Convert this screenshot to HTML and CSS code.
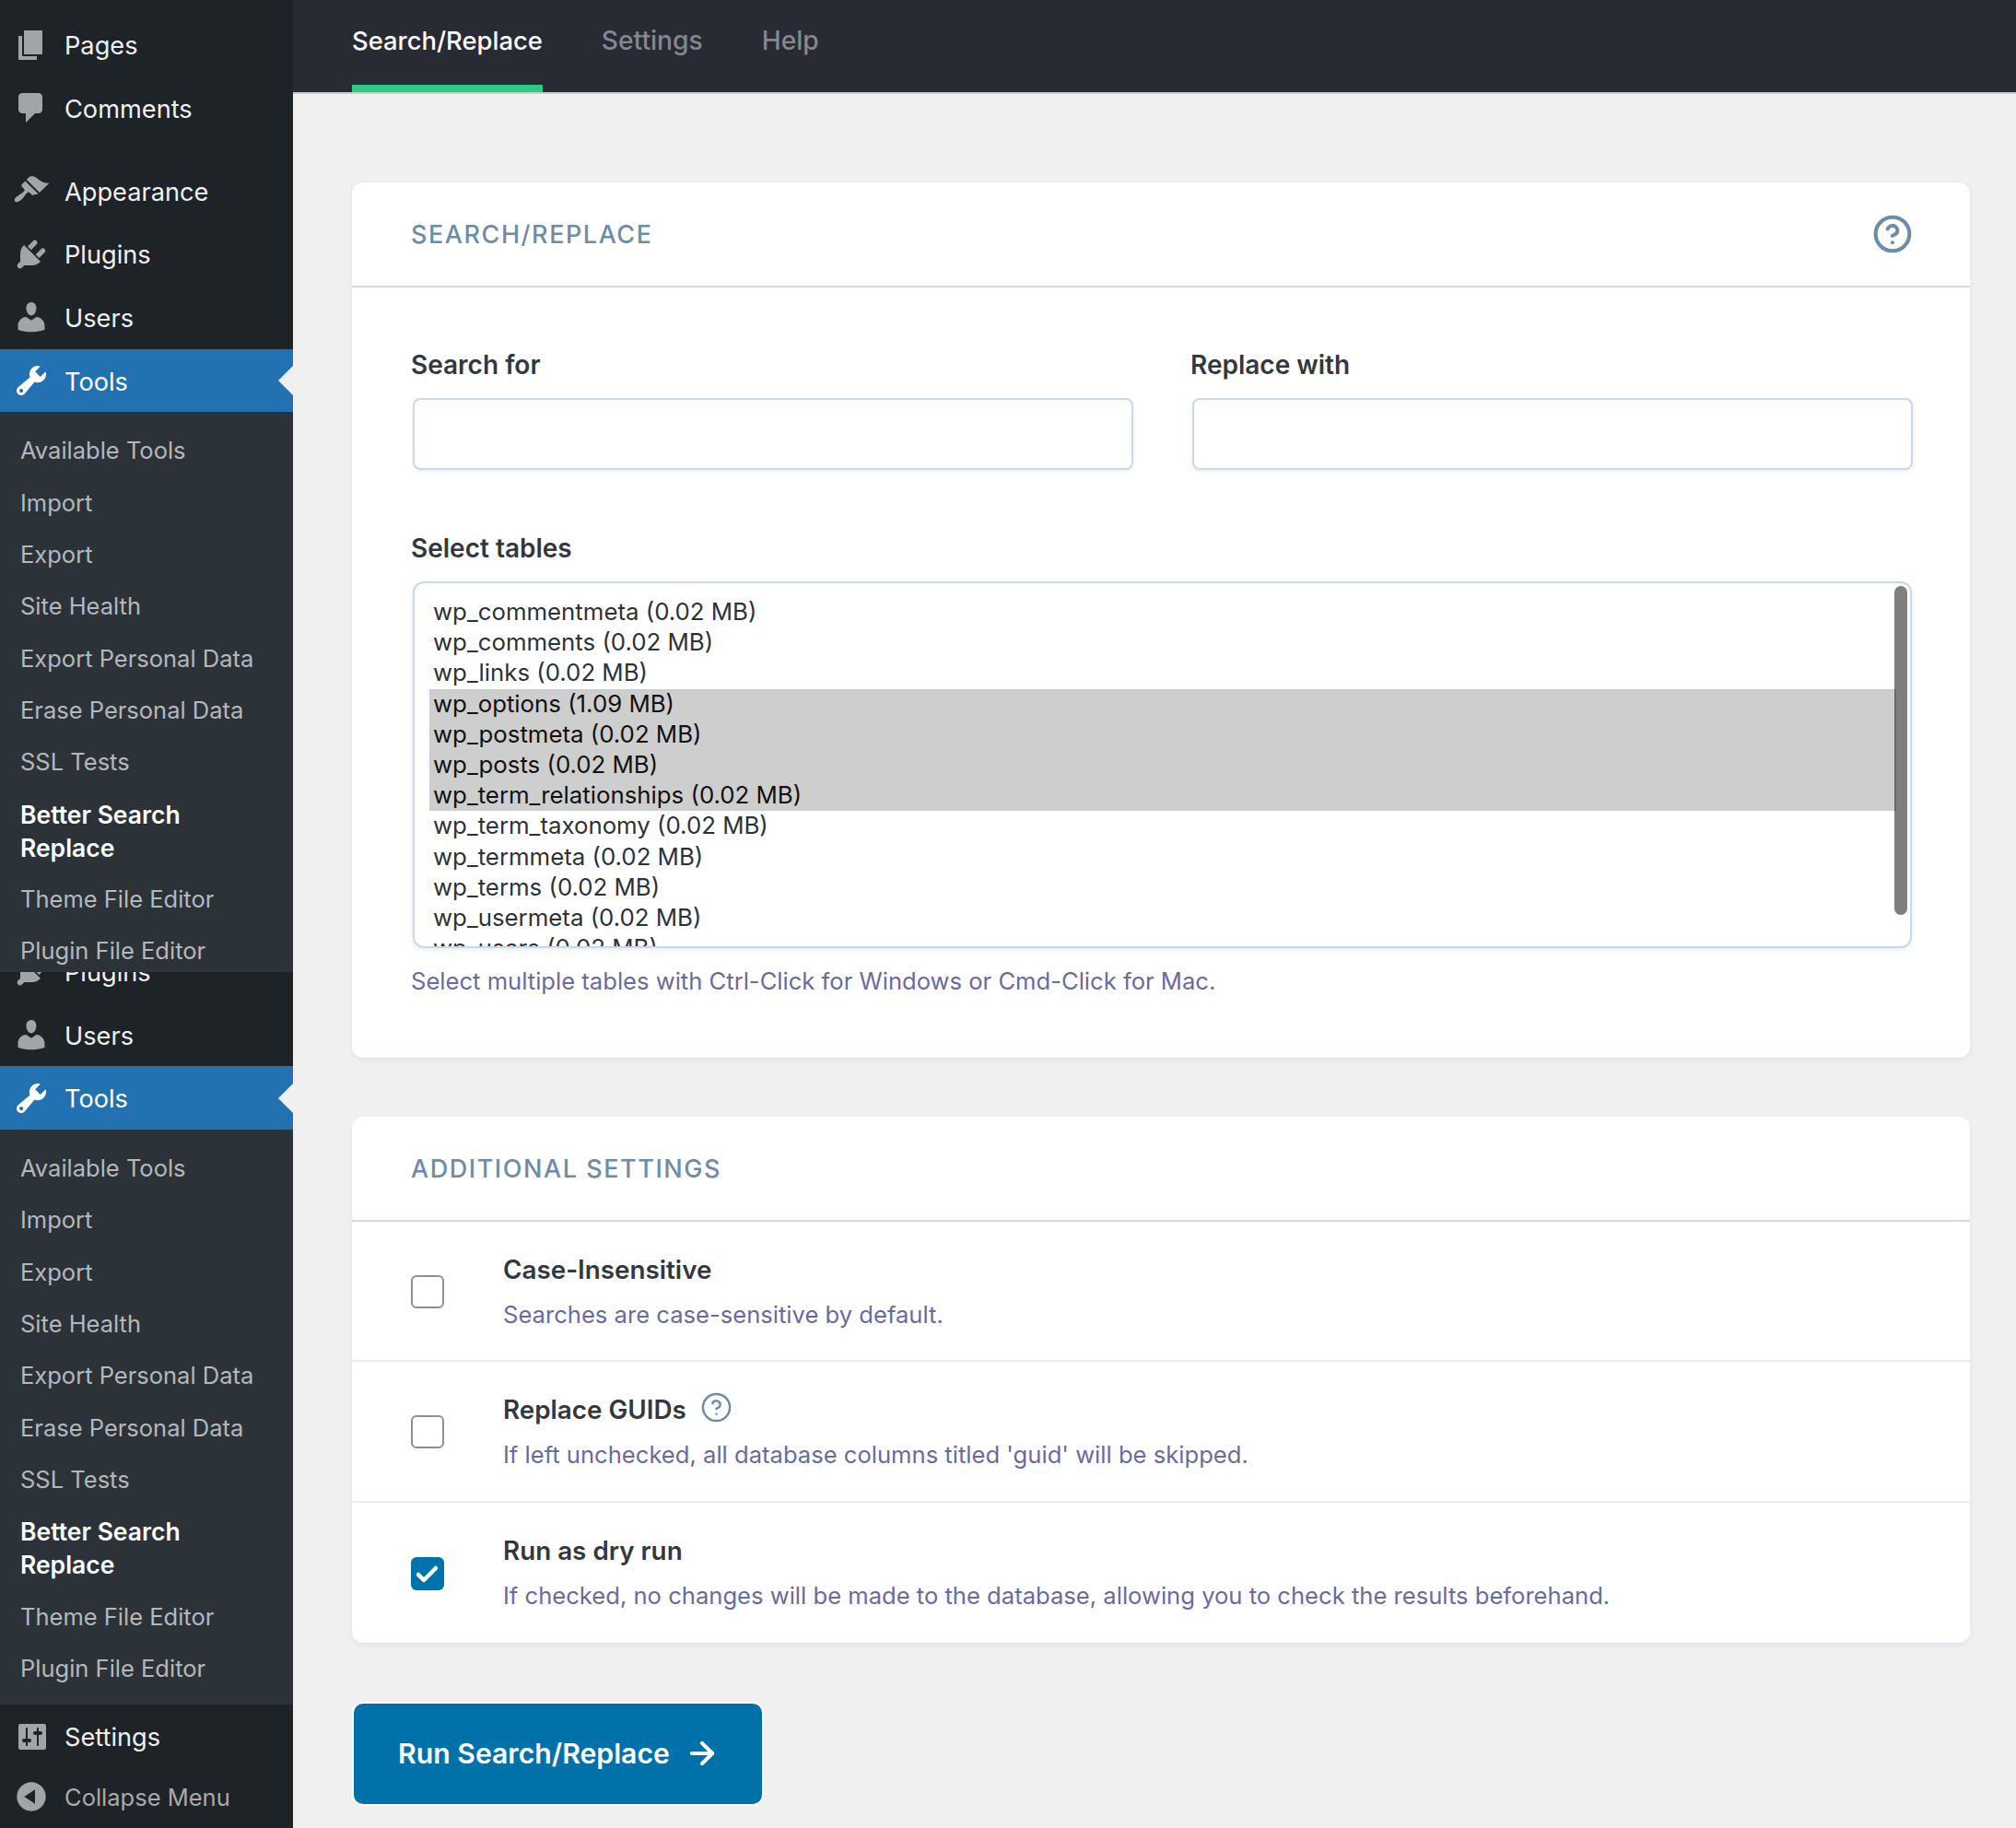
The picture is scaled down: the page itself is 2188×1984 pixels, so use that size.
FILE: index.html
```html
<!DOCTYPE html>
<html lang="en">
<head>
  <meta charset="UTF-8">
  <meta name="viewport" content="width=device-width, initial-scale=1.0">
  <title>Better Search Replace</title>
  <link rel="stylesheet" href="styles.css">
</head>
<body>
  <svg class="iconDefs" xmlns="http://www.w3.org/2000/svg">
    <symbol id="iconPages" viewBox="0 0 20 20"><path d="M6 15V2h10v13H6zm-1 1h8v2H3V5h2v11z"/></symbol>
    <symbol id="iconComments" viewBox="0 0 20 20"><path d="M5 2h9c1.1 0 2 .9 2 2v7c0 1.1-.9 2-2 2h-2l-5 5v-5H5c-1.1 0-2-.9-2-2V4c0-1.1.9-2 2-2z"/></symbol>
    <symbol id="iconAppearance" viewBox="0 0 20 20"><path d="M14.48 11.06L7.41 3.99l1.5-1.5c.5-.56 2.3-.47 3.51.32 1.21.8 1.43 1.28 2.91 2.1 1.18.64 2.45 1.26 4.45.85zm-.71.71L6.7 4.7 4.93 6.47c-.39.39-.39 1.02 0 1.41l1.06 1.06c.39.39.39 1.03 0 1.42-.6.6-1.43 1.11-2.21 1.69-.35.26-.7.53-1.01.84C1.43 13.23.4 14.98 1.25 15.84c.9.85 2.6-.18 3.95-1.53.32-.31.59-.66.85-1.01.58-.78 1.09-1.61 1.69-2.21.39-.39 1.03-.39 1.42 0l1.06 1.06c.39.39 1.02.39 1.41 0z"/></symbol>
    <symbol id="iconPlugins" viewBox="0 0 20 20"><path d="M13.11 4.36L9.87 7.6 8 5.73l3.24-3.24c.35-.34 1.05-.2 1.56.32.52.51.66 1.21.31 1.55zm-8 1.77l.91-1.12 9.01 9.01-1.19.84c-.71.71-2.63 1.16-3.82 1.16H6.14L4.9 17.26c-.59.59-1.54.59-2.12 0-.59-.58-.59-1.53 0-2.12l1.24-1.24v-3.88c0-1.13.4-3.19 1.09-3.89zm7.26 3.97l3.24-3.24c.34-.35 1.04-.21 1.55.31.52.51.66 1.21.31 1.55l-3.24 3.25z"/></symbol>
    <symbol id="iconUsers" viewBox="0 0 20 20"><path d="M10 9.25c-2.27 0-2.73-3.44-2.73-3.44C7 4.02 7.82 2 9.97 2c2.16 0 2.98 2.02 2.71 3.81 0 0-.41 3.44-2.68 3.44zm0 2.57L12.72 10c2.39 0 4.52 2.33 4.52 4.53v2.49s-3.65 1.13-7.24 1.13c-3.65 0-7.24-1.13-7.24-1.13v-2.49c0-2.25 1.94-4.48 4.47-4.48z"/></symbol>
    <symbol id="iconTools" viewBox="0 0 20 20"><path d="M16.68 9.77c-1.34 1.34-3.3 1.67-4.95.99l-5.41 6.52c-.99.99-2.59.99-3.58 0s-.99-2.59 0-3.57l6.52-5.42c-.68-1.65-.35-3.61.99-4.95 1.28-1.28 3.12-1.62 4.72-1.06l-2.89 2.89 2.82 2.82 2.86-2.87c.53 1.58.18 3.39-1.08 4.65zM3.81 16.21c.4.39 1.04.39 1.43 0 .4-.4.4-1.04 0-1.43-.39-.4-1.03-.4-1.43 0-.39.39-.39 1.03 0 1.43z"/></symbol>
    <symbol id="iconSettings" viewBox="0 0 20 20"><path d="M18 16V4c0-.55-.45-1-1-1H4c-.55 0-1 .45-1 1v12c0 .55.45 1 1 1h13c.55 0 1-.45 1-1zM8 11h1c.55 0 1 .45 1 1s-.45 1-1 1H8v1.5c0 .28-.22.5-.5.5s-.5-.22-.5-.5V13H6c-.55 0-1-.45-1-1s.45-1 1-1h1V5.500c0-.28.22-.5.5-.5s.5.22.5.5V11zm5-2h-1c-.55 0-1-.45-1-1s.45-1 1-1h1V5.500c0-.28.22-.5.5-.5s.5.22.5.5V7h1c.55 0 1 .45 1 1s-.45 1-1 1h-1v5.500c0 .28-.22.5-.5.5s-.5-.22-.5-.5V9z"/></symbol>
    <symbol id="iconCollapse" viewBox="0 0 20 20"><path d="M10 2.16c4.33 0 7.84 3.51 7.84 7.84s-3.51 7.84-7.84 7.84S2.16 14.33 2.16 10 5.71 2.16 10 2.16zm2 11.72V6.12L6.18 9.97z"/></symbol>
    <symbol id="iconHelp" viewBox="0 0 24 24"><circle cx="12" cy="12" r="10"/><path d="M9.1 9a3 3 0 0 1 5.8 1c0 2-3 3-3 3"/><path d="M12 17h.01"/></symbol>
  </svg>

  <div class="adminMenu">
    <div class="menuPart menuPartTop">
      <a class="menuItem"><svg class="menuIcon"><use href="#iconPages"/></svg>Pages</a>
      <a class="menuItem"><svg class="menuIcon"><use href="#iconComments"/></svg>Comments</a>
      <div class="menuSeparator"></div>
      <a class="menuItem"><svg class="menuIcon"><use href="#iconAppearance"/></svg>Appearance</a>
      <a class="menuItem"><svg class="menuIcon"><use href="#iconPlugins"/></svg>Plugins</a>
      <a class="menuItem"><svg class="menuIcon"><use href="#iconUsers"/></svg>Users</a>
      <a class="menuItem current"><svg class="menuIcon"><use href="#iconTools"/></svg>Tools</a>
      <div class="subMenu">
        <a class="subItem">Available Tools</a>
        <a class="subItem">Import</a>
        <a class="subItem">Export</a>
        <a class="subItem">Site Health</a>
        <a class="subItem">Export Personal Data</a>
        <a class="subItem">Erase Personal Data</a>
        <a class="subItem">SSL Tests</a>
        <a class="subItem active">Better Search Replace</a>
        <a class="subItem">Theme File Editor</a>
        <a class="subItem">Plugin File Editor</a>
      </div>
    </div>

    <!-- the screenshot was stitched, so the menu shows up a second time -->
    <div class="menuPart menuPartBottom">
      <a class="menuItem"><svg class="menuIcon"><use href="#iconPlugins"/></svg>Plugins</a>
      <a class="menuItem"><svg class="menuIcon"><use href="#iconUsers"/></svg>Users</a>
      <a class="menuItem current"><svg class="menuIcon"><use href="#iconTools"/></svg>Tools</a>
      <div class="subMenu">
        <a class="subItem">Available Tools</a>
        <a class="subItem">Import</a>
        <a class="subItem">Export</a>
        <a class="subItem">Site Health</a>
        <a class="subItem">Export Personal Data</a>
        <a class="subItem">Erase Personal Data</a>
        <a class="subItem">SSL Tests</a>
        <a class="subItem active">Better Search Replace</a>
        <a class="subItem">Theme File Editor</a>
        <a class="subItem">Plugin File Editor</a>
      </div>
      <a class="menuItem"><svg class="menuIcon"><use href="#iconSettings"/></svg>Settings</a>
      <a class="menuItem collapse"><svg class="menuIcon"><use href="#iconCollapse"/></svg>Collapse Menu</a>
    </div>
  </div>

  <div class="main">
    <div class="tabBar">
      <a class="tab selected">Search/Replace</a>
      <a class="tab">Settings</a>
      <a class="tab">Help</a>
    </div>

    <div class="content">
      <div class="card">
        <div class="cardHeader">
          <div class="cardTitle">Search/Replace</div>
          <svg class="helpIcon"><use href="#iconHelp"/></svg>
        </div>
        <div class="cardBody">
          <div class="fieldRow">
            <div class="field">
              <label class="fieldLabel">Search for</label>
              <input class="textInput" type="text">
            </div>
            <div class="field">
              <label class="fieldLabel">Replace with</label>
              <input class="textInput" type="text">
            </div>
          </div>
          <label class="fieldLabel">Select tables</label>
          <div class="tableList">
            <div class="tableOption">wp_commentmeta (0.02 MB)</div>
            <div class="tableOption">wp_comments (0.02 MB)</div>
            <div class="tableOption">wp_links (0.02 MB)</div>
            <div class="tableOption selected">wp_options (1.09 MB)</div>
            <div class="tableOption selected">wp_postmeta (0.02 MB)</div>
            <div class="tableOption selected">wp_posts (0.02 MB)</div>
            <div class="tableOption selected">wp_term_relationships (0.02 MB)</div>
            <div class="tableOption">wp_term_taxonomy (0.02 MB)</div>
            <div class="tableOption">wp_termmeta (0.02 MB)</div>
            <div class="tableOption">wp_terms (0.02 MB)</div>
            <div class="tableOption">wp_usermeta (0.02 MB)</div>
            <div class="tableOption">wp_users (0.02 MB)</div>
            <div class="listScrollbar"></div>
          </div>
          <div class="hint">Select multiple tables with Ctrl-Click for Windows or Cmd-Click for Mac.</div>
        </div>
      </div>

      <div class="card">
        <div class="cardHeader">
          <div class="cardTitle">Additional Settings</div>
        </div>
        <div class="settingRow">
          <div class="checkBox"></div>
          <div class="settingText">
            <div class="settingTitle">Case-Insensitive</div>
            <div class="settingHint">Searches are case-sensitive by default.</div>
          </div>
        </div>
        <div class="settingRow">
          <div class="checkBox"></div>
          <div class="settingText">
            <div class="settingTitle">Replace GUIDs <svg class="helpIconSmall"><use href="#iconHelp"/></svg></div>
            <div class="settingHint">If left unchecked, all database columns titled 'guid' will be skipped.</div>
          </div>
        </div>
        <div class="settingRow">
          <div class="checkBox checked">
            <svg class="checkMark" viewBox="0 0 36 36"><path d="M8 19l6 6 13-13"/></svg>
          </div>
          <div class="settingText">
            <div class="settingTitle">Run as dry run</div>
            <div class="settingHint">If checked, no changes will be made to the database, allowing you to check the results beforehand.</div>
          </div>
        </div>
      </div>

      <button class="runButton">
        Run Search/Replace
        <svg class="runArrow" viewBox="0 0 24 24"><path d="M5 12h14"/><path d="M12 5l7 7-7 7"/></svg>
      </button>
    </div>
  </div>
</body>
</html>
```

FILE: styles.css
```css
* {
  margin: 0;
  padding: 0;
  box-sizing: border-box;
}

html, body {
  height: 1984px;
  overflow: hidden;
}

body {
  font-family: Inter, "Liberation Sans", sans-serif;
  display: flex;
  background-color: #f0f0f1;
  color: #32383e;
}

.iconDefs {
  display: none;
}

/* admin menu */
.adminMenu {
  width: 318px;
  flex-shrink: 0;
  background-color: #1d2327;
  display: flex;
  flex-direction: column;
}

.menuPart {
  display: flex;
  flex-direction: column;
  overflow: hidden;
  flex-shrink: 0;
}

.menuPartTop {
  height: 1055px;
  padding-top: 14.5px;
}

.menuPartBottom {
  height: 929px;
  justify-content: flex-end;
}

.menuItem {
  position: relative;
  flex-shrink: 0;
  height: 68.67px;
  padding-left: 14px;
  padding-top: 2px;
  display: flex;
  align-items: center;
  gap: 16px;
  font-size: 27.2px;
  color: #f0f0f1;
}

.menuIcon {
  width: 40px;
  height: 40px;
  margin-top: -2px;
  fill: #a0a5aa;
  flex-shrink: 0;
}

.menuSeparator {
  height: 21px;
  flex-shrink: 0;
}

.menuItem.current {
  background-color: #2271b1;
  color: #fff;
}

.menuItem.current .menuIcon {
  fill: #fff;
}

.menuItem.current::after {
  content: '';
  position: absolute;
  right: 0;
  top: 50%;
  margin-top: -16px;
  border-top: 16px solid transparent;
  border-bottom: 16px solid transparent;
  border-right: 16px solid #f0f0f1;
}

.menuItem.collapse {
  height: 65px;
  padding-top: 0;
  padding-bottom: 2px;
  font-size: 25.5px;
  color: #a7aaad;
}

.subMenu {
  flex-shrink: 0;
  background-color: #2c3338;
  padding: 14px 0 11px;
  display: flex;
  flex-direction: column;
}

.subItem {
  padding: 10px 22px 10px;
  line-height: 36.3px;
  font-size: 25.5px;
  color: #b4b8bc;
}

.subItem.active {
  color: #fff;
  font-size: 26.5px;
  font-weight: 600;
  padding-right: 60px;
}

/* top tabs */
.main {
  flex: 1;
  min-width: 0;
}

.tabBar {
  height: 102px;
  padding-left: 64px;
  background-color: #282b34;
  border-bottom: 2px solid #ccc;
  display: flex;
  gap: 64px;
}

.tab {
  height: 100px;
  padding-top: 24px;
  font-size: 28.2px;
  line-height: 40px;
  font-weight: 500;
  color: #85888e;
}

.tab.selected {
  font-size: 27.4px;
  color: #fff;
  border-bottom: 8px solid #2bcb85;
}

.content {
  padding: 96px 50px 0 64px;
}

/* cards */
.card {
  background-color: white;
  border-radius: 12px;
  box-shadow: 0 2px 5px rgba(190, 208, 232, 0.45);
  margin-bottom: 64px;
}

.cardHeader {
  height: 114px;
  padding: 0 62px 0 64px;
  border-bottom: 2px solid #cddbeb;
  display: flex;
  align-items: center;
  justify-content: space-between;
}

.cardTitle {
  font-size: 27px;
  font-weight: 500;
  letter-spacing: 1.55px;
  text-transform: uppercase;
  color: #6e8ca8;
}

.helpIcon {
  width: 44px;
  height: 44px;
  fill: none;
  stroke: #6e8ca8;
  stroke-width: 2.2;
  stroke-linecap: round;
  stroke-linejoin: round;
}

.helpIconSmall {
  width: 35px;
  height: 35px;
  margin-bottom: 5px;
  fill: none;
  stroke: #6e8ca8;
  stroke-width: 1.7;
  stroke-linecap: round;
  stroke-linejoin: round;
}

.cardBody {
  padding: 67px 64px 66px 64px;
}

.fieldRow {
  display: grid;
  grid-template-columns: 782px 782px;
  gap: 64px;
  margin-bottom: 68px;
}

.fieldLabel {
  display: block;
  font-size: 28px;
  line-height: 34px;
  font-weight: 600;
  margin-bottom: 19px;
}

.textInput {
  display: block;
  width: 100%;
  height: 78px;
  margin-left: 2px;
  background-color: white;
  border: 2px solid #c9d9ec;
  border-radius: 8px;
  box-shadow: 0 2px 4px rgba(190, 208, 232, 0.35);
}

.tableList {
  position: relative;
  height: 398px;
  margin: 0 -1px 0 2px;
  padding: 15px 15px 0 16px;
  background-color: white;
  border: 2px solid #c9d9ec;
  border-radius: 12px;
  box-shadow: 0 2px 6px rgba(190, 208, 232, 0.35);
  overflow: hidden;
}

.tableOption {
  height: 33.2px;
  padding-left: 4px;
  line-height: 32.2px;
  font-size: 25.8px;
  color: #2c3338;
}

.tableOption.selected {
  background-color: #cecece;
  color: #111;
}

.listScrollbar {
  position: absolute;
  top: 3px;
  right: 3px;
  width: 14px;
  height: 357px;
  border-radius: 7px;
  background-color: rgba(0, 0, 0, 0.5);
}

.hint {
  margin-top: 19px;
  font-size: 25.6px;
  line-height: 34px;
  color: #6a6a9f;
}

/* settings rows */
.settingRow {
  height: 152.33px;
  padding-left: 64px;
  padding-top: 2px;
  display: flex;
  align-items: center;
  gap: 65px;
  border-bottom: 2px solid #e8edf6;
}

.settingRow:last-child {
  border-bottom: none;
  border-radius: 0 0 12px 12px;
}

.checkBox {
  width: 36px;
  height: 36px;
  flex-shrink: 0;
  border: 2px solid #8c8f94;
  border-radius: 6px;
}

.checkBox.checked {
  background-color: #0073aa;
  border: none;
}

.checkMark {
  display: block;
  fill: none;
  stroke: white;
  stroke-width: 4.5;
  stroke-linecap: round;
  stroke-linejoin: round;
}

.settingText {
  margin-left: -1px;
}

.settingTitle {
  height: 34px;
  display: flex;
  align-items: center;
  gap: 15px;
  font-size: 27.8px;
  line-height: 34px;
  font-weight: 600;
}

.settingHint {
  margin-top: 15px;
  font-size: 25.6px;
  line-height: 34px;
  color: #6a6a9f;
}

.runButton {
  display: flex;
  align-items: center;
  gap: 16px;
  width: 447px;
  height: 113px;
  padding-left: 48px;
  font-family: Inter, "Liberation Sans", sans-serif;
  font-size: 30.2px;
  font-weight: 600;
  color: white;
  background-color: #0071a9;
  border: 2px solid white;
  border-radius: 12px;
}

.runArrow {
  width: 38px;
  height: 38px;
  fill: none;
  stroke: white;
  stroke-width: 2.6;
  stroke-linecap: round;
  stroke-linejoin: round;
}
```
